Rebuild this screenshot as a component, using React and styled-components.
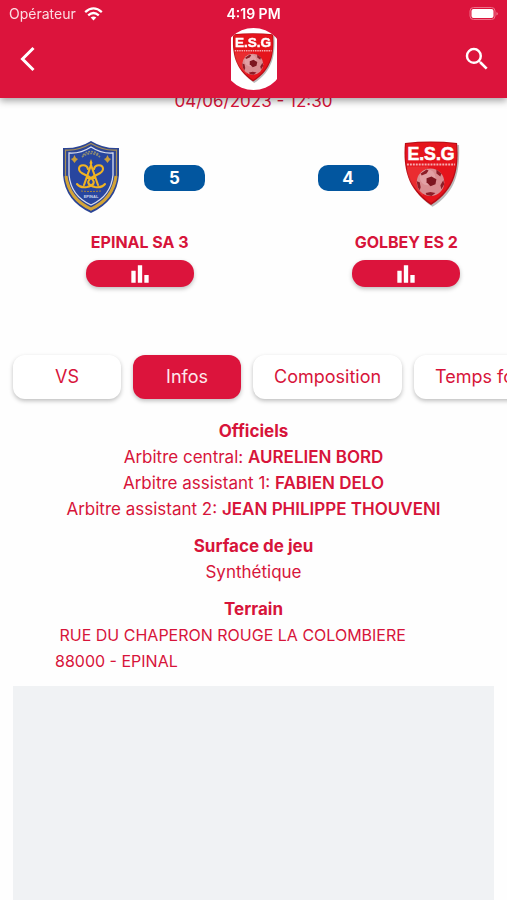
import React, { useState } from 'react';
import styled, { createGlobalStyle } from 'styled-components';
import { MdSearch, MdBarChart } from 'react-icons/md';

const GlobalStyle = createGlobalStyle`
	* {
		box-sizing: border-box;
		margin: 0;
		padding: 0;
	}
	body {
		background-color: #fefefe;
		color: #d7143a;
		font-family: Inter, 'Open Sans', sans-serif;
		font-size: 17px;
		line-height: 26px;
	}
	button {
		border: none;
		font: inherit;
		cursor: pointer;
	}
	svg {
		display: block;
	}
`;

const Page = styled.div`
	min-height: 100vh;
	display: flex;
	flex-direction: column;
`;

const Header = styled.header`
	position: fixed;
	top: 0;
	left: 0;
	right: 0;
	z-index: 1;
	height: 98px;
	background-color: #dc143c;
	color: #fff;
	box-shadow: 0 3px 7px rgba(0,0,0, .35);
`;

const StatusRow = styled.div`
	height: 28px;
	padding: 0 9px;
	display: grid;
	grid-template-columns: 1fr auto 1fr;
	align-items: center;
	font-size: 14px;
`;

const Carrier = styled.div`
	display: flex;
	align-items: center;
	gap: 8px;
	color: #fbdce2;
`;

const Clock = styled.time`
	font-weight: 600;
`;

const Battery = styled.div`
	display: flex;
	justify-content: flex-end;
`;

const Nav = styled.nav`
	height: 62px;
	padding: 0 15px;
	display: grid;
	grid-template-columns: 1fr auto 1fr;
	align-items: center;
`;

const IconBtn = styled.button`
	justify-self: ${({ $end }) => ($end ? 'end' : 'start')};
	padding: ${({ $end }) => ($end ? '0' : '0 5px')};
	background: none;
	color: #fff;
`;

const Logo = styled.div`
	width: 46px;
	height: 62px;
	padding-top: 4px;
	display: flex;
	justify-content: center;
	background-color: #fff;
	clip-path: circle(31px at center);
`;

const Main = styled.main`
	flex: 1;
	padding-top: 88px;
	display: flex;
	flex-direction: column;
`;

const MatchDate = styled.p`
	text-align: center;
`;

const Teams = styled.section`
	padding: 26px 0 0 39px;
	display: grid;
	grid-template-columns: 1fr 1fr;
	gap: 65px;
`;

const TeamCard = styled.article`
	display: flex;
	flex-direction: column;
	align-items: center;
`;

const ScoreRow = styled.div`
	width: 100%;
	height: 76px;
	padding: ${({ $away }) => ($away ? '0 12px' : '0 22px')};
	display: flex;
	flex-direction: ${({ $away }) => ($away ? 'row-reverse' : 'row')};
	justify-content: ${({ $away }) => ($away ? 'flex-end' : 'flex-start')};
	align-items: center;
	gap: 23px;
`;

const CrestBox = styled.div`
	width: 60px;
	height: 76px;
`;

const Score = styled.span`
	width: 61px;
	height: 26px;
	border-radius: 10px;
	background-color: #02569f;
	color: #fff;
	font-weight: 700;
	text-align: center;
`;

const TeamName = styled.h2`
	margin: 13px 0 5px;
	font-size: 16px;
	font-weight: 700;
`;

const StatsBtn = styled.button`
	width: 108px;
	height: 27px;
	display: flex;
	justify-content: center;
	align-items: center;
	border-radius: 13px;
	background-color: #dc143c;
	color: #fff;
	box-shadow: 0 2px 4px rgba(0,0,0, .25);
`;

const Tabs = styled.div`
	margin-top: 56px;
	padding: 12px 13px;
	display: flex;
	gap: 12px;
	overflow-x: auto;
	scrollbar-width: none;
`;

const Tab = styled.button`
	flex: none;
	min-width: 108px;
	height: 44px;
	padding: 0 21px;
	border-radius: 12px;
	background-color: ${({ $active }) => ($active ? '#dc143c' : '#fff')};
	color: ${({ $active }) => ($active ? '#fde8ec' : '#d7143a')};
	font-size: 18px;
	box-shadow: 0 2px 4px rgba(0,0,0, .25);
`;

const Infos = styled.section`
	padding: 7px 13px 0;
	display: flex;
	flex-direction: column;
	gap: 11px;
`;

const Block = styled.div`
	text-align: center;
	h2 {
		font-size: 17px;
		font-weight: 700;
	}
	b {
		font-weight: 600;
	}
`;

const Address = styled.address`
	padding: 0 42px;
	font-size: 16px;
	font-style: normal;
	text-align: left;
`;

const Map = styled.div`
	flex: 1;
	margin: 12px 13px 0;
	background-color: #f0f2f4;
`;

const officials = [
	{ role: 'Arbitre central', name: 'AURELIEN BORD' },
	{ role: 'Arbitre assistant 1', name: 'FABIEN DELO' },
	{ role: 'Arbitre assistant 2', name: 'JEAN PHILIPPE THOUVENI' },
];

const tabs = ['VS', 'Infos', 'Composition', 'Temps forts'];

const Ball = () => (
	<g>
		<circle cx='29' cy='43' r='14' fill='#d98d91' />
		<circle cx='26' cy='38' r='8' fill='#e8adb0' opacity='.6' />
		<path d='M25 39l5-2 5 3-1 5-5 2-4-4z' fill='#7d1620' />
		<path d='M19 34l6-4 2 1-2 3-5 2zM35 30l5 4-1 3-4-3zM15 42l3 1 1 5-1 3-2-3zM42 41l1 4-3 5-1-4zM24 54l5-1 5 1-4 3-5-1z' fill='#8d1d27' />
	</g>
);

const GolbeyCrest = ({ size }) => (
	<svg width={size} height={size * 70 / 60} viewBox='0 0 60 70' role='img' aria-label='E.S.G'>
		<path d='M5 5Q31 1 58 5C59 30 56 52 31 68C8 52 3 30 5 5z' fill='#666' opacity='.45' />
		<path d='M3 3Q29 0 56 3C58 28 55 50 29.500 66C5 50 1 28 3 3z' fill='#b80d16' />
		<path d='M4 4Q29 1 55 4C57 28 53 49 29.500 64C7 49 2 28 4 4z' fill='#e5141c' />
		<path d='M5 27h22L21 57C9 46 5 38 5 27z' fill='#f04a4a' opacity='.45' />
		<path d='M5 25h49' stroke='#fff' strokeWidth='2' strokeDasharray='2 1' opacity='.65' />
		<text x='29.500' y='20.500' textAnchor='middle' fontFamily='"Liberation Sans", sans-serif' fontWeight='700' fontSize='18' fill='#fff' stroke='#fff' strokeWidth='.6'>E.S.G</text>
		<Ball />
	</svg>
);

const EpinalCrest = () => (
	<svg width='60' height='74' viewBox='0 0 60 74' role='img' aria-label='Epinal'>
		<path d='M30 1Q17 9 2 8V35Q4 61 30 73Q56 61 58 35V8Q43 9 30 1z' fill='#2c4595' />
		<path d='M30 3.500Q17 11 4.500 10V35Q7 59 30 70Q53 59 55.500 35V10Q43 11 30 3.500z' fill='none' stroke='#a99055' strokeWidth='1.200' />
		<path d='M5 36Q8 59 30 69Q52 59 55 36' fill='none' stroke='#d3a437' strokeWidth='3' />
		<path d='M30 7Q19 14 8 13V35Q10 56 30 65Q50 56 52 35V13Q41 14 30 7z' fill='#28469f' stroke='#d9deee' strokeWidth='1.300' />
		<path d='M21 17Q30 10 39 17M22 15Q30 8 38 15' fill='none' stroke='#8e8b72' strokeWidth='1.600' strokeDasharray='2 1' />
		<path d='M13.500 15l1.500 3 2 1-2 2-1.500 2-1.500-2-2-2 2-1zM46.500 15l1.500 3 2 1-2 2-1.500 2-1.500-2-2-2 2-1z' fill='#c99d3a' />
		<path d='M30 19l1.500 4-1.500 3-1.500-3z' fill='#f0b323' />
		<g fill='none' stroke='#f0b323' strokeWidth='2.100' strokeLinecap='round'>
			<path d='M30 25L23 45M30 25L37 45M26 38H34' />
			<path d='M27 29C26 24 18 24 18 29C18 34 25 34 30 38C36 43 31 46 26 47Q19 48 16 44' />
			<path d='M33 29C34 24 42 24 42 29C42 34 35 34 30 38C24 43 29 46 34 47Q41 48 44 44' />
		</g>
		<path d='M20 51Q30 52 40 51' fill='none' stroke='#a5843f' strokeWidth='1' strokeDasharray='2 1' />
		<text x='30' y='58' textAnchor='middle' fontFamily='"Liberation Sans", sans-serif' fontWeight='700' fontSize='4' fill='#cdd5ec'>EPINAL</text>
	</svg>
);

const StatusBar = () => (
	<StatusRow>
		<Carrier>
			Opérateur
			<svg width='19' height='14' viewBox='0 0 19 14' fill='none' stroke='#fff' strokeWidth='2.300'>
				<path d='M1.200 5.100Q9.500-2.300 17.800 5.100M4.200 8.300Q9.500 3.700 14.800 8.300' />
				<path d='M9.500 13.500L6.700 10.600Q9.500 8.500 12.300 10.600z' fill='#fff' stroke='none' />
			</svg>
		</Carrier>
		<Clock>4:19 PM</Clock>
		<Battery>
			<svg width='29' height='14' viewBox='0 0 29 14'>
				<rect x='1' y='.500' width='25' height='12' rx='3.500' fill='none' stroke='#ee7189' strokeWidth='1' />
				<rect x='2.500' y='2' width='22' height='9' rx='2' fill='#fff' />
				<path d='M27.500 5Q30 6.500 27.500 8.500z' fill='#f08a9c' />
			</svg>
		</Battery>
	</StatusRow>
);

const Team = ({ name, score, crest, away }) => (
	<TeamCard>
		<ScoreRow $away={away}>
			<CrestBox>{crest}</CrestBox>
			<Score>{score}</Score>
		</ScoreRow>
		<TeamName>{name}</TeamName>
		<StatsBtn type='button' aria-label={`Statistiques ${name}`}>
			<MdBarChart size={26} />
		</StatsBtn>
	</TeamCard>
);

const App = () => {
	const [active, setActive] = useState('Infos');

	return (
		<>
			<GlobalStyle />
			<Page>
				<Header>
					<StatusBar />
					<Nav>
						<IconBtn type='button' aria-label='Retour'>
							<svg width='16' height='26' viewBox='0 0 16 26' fill='none' stroke='#fff' strokeWidth='3'>
								<path d='M13.500 2L2.500 13L13.500 24' />
							</svg>
						</IconBtn>
						<Logo>
							<GolbeyCrest size={45} />
						</Logo>
						<IconBtn type='button' aria-label='Rechercher' $end>
							<MdSearch size={30} />
						</IconBtn>
					</Nav>
				</Header>
				<Main>
					<MatchDate>04/06/2023 - 12:30</MatchDate>
					<Teams>
						<Team name='EPINAL SA 3' score={5} crest={<EpinalCrest />} />
						<Team name='GOLBEY ES 2' score={4} crest={<GolbeyCrest size={59} />} away />
					</Teams>
					<Tabs>
						{tabs.map(tab => (
							<Tab key={tab} type='button' $active={tab === active} onClick={() => setActive(tab)}>{tab}</Tab>
						))}
					</Tabs>
					<Infos>
						<Block>
							<h2>Officiels</h2>
							{officials.map(({ role, name }) => (
								<p key={role}>{role}: <b>{name}</b></p>
							))}
						</Block>
						<Block>
							<h2>Surface de jeu</h2>
							<p>Synthétique</p>
						</Block>
						<Block>
							<h2>Terrain</h2>
							<Address>&nbsp;RUE DU CHAPERON ROUGE LA COLOMBIERE<br />88000 - EPINAL</Address>
						</Block>
					</Infos>
					<Map />
				</Main>
			</Page>
		</>
	)
}

export default App;
